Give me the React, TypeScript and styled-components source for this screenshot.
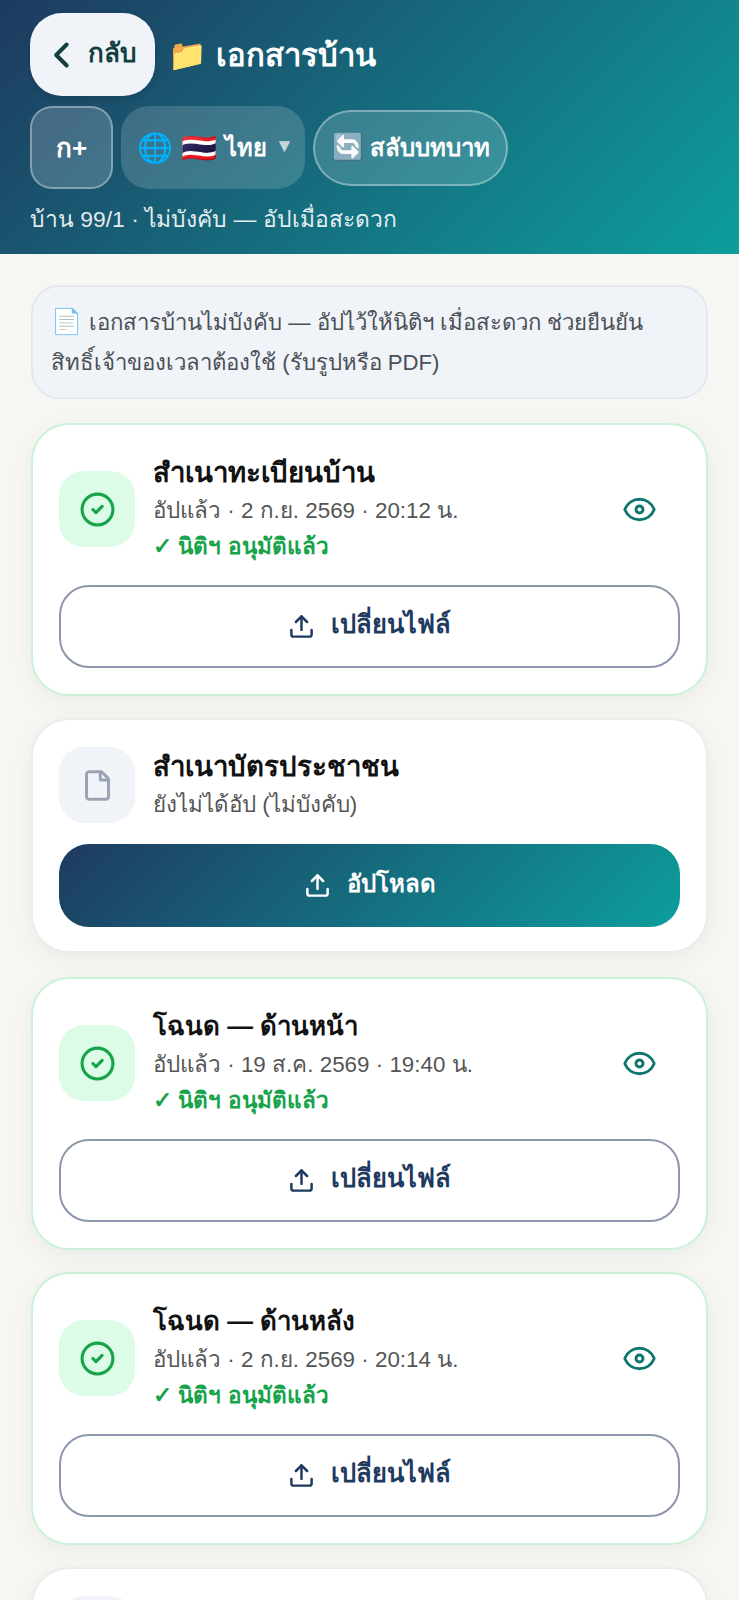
import * as React from "react";
import styled, { createGlobalStyle } from "styled-components";

const GlobalStyle = createGlobalStyle`
    html, body {
        margin: 0;
        padding: 0;
        background: #f6f7f2;
        font-family: "Liberation Sans", "Noto Sans", sans-serif;
    }
    * { box-sizing: border-box; }
`;

const Page = styled.div`
    width: 739px;
    height: 1600px;
    overflow: hidden;
    background: #f6f7f2;
`;

const Header = styled.header`
    height: 254px;
    padding: 13px 30px 0;
    background: linear-gradient(135deg, #1e3a5f, #0d9e9c);
    color: #fff;
`;

const TitleRow = styled.div`
    display: flex;
    align-items: center;
    gap: 13px;
`;

const BackButton = styled.button`
    width: 125px;
    height: 83px;
    border: none;
    border-radius: 32px;
    background: #f0f4f8;
    color: #143f3f;
    font: bold 26px "Liberation Sans", sans-serif;
    display: flex;
    align-items: center;
    justify-content: center;
    gap: 12px;
    padding: 0;
    box-shadow: 0 2px 6px rgba(0,0,0,0.15);
`;

const Label = styled.span`
    margin-bottom: 5px;
`;

const Title = styled.h1`
    margin: 0;
    font-size: 31px;
    font-weight: 700;
`;

const ToolRow = styled.div`
    display: flex;
    align-items: center;
    gap: 8px;
    margin-top: 10px;
`;

const FontButton = styled.div`
    width: 83px;
    height: 83px;
    border-radius: 22px;
    border: 2px solid rgba(255,255,255,0.35);
    background: rgba(255,255,255,0.18);
    display: flex;
    align-items: center;
    justify-content: center;
    font-size: 26px;
    font-weight: 700;
`;

const Emoji = styled.span<{ $size: number }>`
    font-size: ${p => p.$size}px;
`;

const NoticeEmoji = styled.span`
    font-size: 25px;
    margin-right: 7px;
`;

const LangSelect = styled.div`
    width: 184px;
    height: 83px;
    padding-left: 5px;
    border-radius: 28px;
    background: rgba(255,255,255,0.16);
    display: flex;
    align-items: center;
    justify-content: center;
    gap: 8px;
    font-size: 23.7px;
    font-weight: 700;
`;

const Caret = styled.span`
    font-size: 19px;
    opacity: 0.7;
    margin-bottom: 4px;
`;

const RoleButton = styled.div`
    width: 195px;
    height: 76px;
    border-radius: 38px;
    border: 2px solid rgba(255,255,255,0.35);
    background: rgba(255,255,255,0.16);
    display: flex;
    align-items: center;
    justify-content: center;
    gap: 6px;
    font-size: 24px;
    font-weight: 700;
    white-space: nowrap;
`;

const SubTitle = styled.div`
    margin-top: 12px;
    font-size: 22.85px;
    line-height: 36px;
    color: rgba(255,255,255,0.9);
`;

const Body = styled.main`
    padding: 31px 31px 0;
    display: flex;
    flex-direction: column;
    gap: 22px;
`;

const Notice = styled.div`
    height: 114px;
    padding: 14px 30px 14px 18px;
    border-radius: 28px;
    border: 2px solid #e4e8ee;
    background: #f0f4f8;
    color: #4a4f57;
    font-size: 22.2px;
    line-height: 40px;
    margin-bottom: 2px;
`;

const Card = styled.section<{ $done?: boolean }>`
    flex: none;
    padding: ${p => (p.$done ? "28px 26px 26px" : "27px 26px 24px")};
    margin-bottom: ${p => (p.$done ? "0" : "2px")};
    border-radius: 38px;
    background: #fff;
    border: 2px solid ${p => (p.$done ? "#c9f2d8" : "#ebedeb")};
    box-shadow: 0 6px 24px rgba(0,0,0,0.05);
`;

const CardTop = styled.div`
    display: flex;
    align-items: center;
    gap: 18px;
`;

const IconBox = styled.div<{ $done?: boolean }>`
    flex: none;
    width: 76px;
    height: 76px;
    border-radius: 25px;
    background: ${p => (p.$done ? "#dcfce7" : "#f0f4f8")};
    display: flex;
    align-items: center;
    justify-content: center;
`;

const Info = styled.div`
    flex: 1;
    min-width: 0;
`;

const DocName = styled.div<{ $size: number }>`
    font-size: ${p => p.$size}px;
    font-weight: 700;
    line-height: 39px;
    color: #111;
`;

const DocMeta = styled.div`
    font-size: 22.4px;
    line-height: 37px;
    color: #555;
`;

const Approved = styled.div`
    font-size: 22.5px;
    font-weight: 700;
    line-height: 36px;
    color: #16a34a;
`;

const EyeButton = styled.div`
    flex: none;
    width: 56px;
    display: flex;
    justify-content: center;
    margin-right: 13px;
    color: #0f766e;
`;

const ActionButton = styled.div<{ $primary?: boolean }>`
    height: 83px;
    margin-top: ${p => (p.$primary ? "21px" : "20px")};
    border-radius: 30px;
    display: flex;
    align-items: center;
    justify-content: center;
    gap: 16px;
    font-size: ${p => (p.$primary ? "24px" : "25.4px")};
    font-weight: 700;
    border: ${p => (p.$primary ? "none" : "2px solid #8d97ab")};
    background: ${p => (p.$primary ? "linear-gradient(135deg, #1e3a5f, #0d9e9c)" : "#fff")};
    color: ${p => (p.$primary ? "#fff" : "#1e3a5f")};
`;

const UploadIcon = () => (
    <svg width="27" height="27" viewBox="0 0 24 24" fill="none" stroke="currentColor" strokeWidth="2.2" strokeLinecap="round" strokeLinejoin="round">
        <path d="M12 3v12" />
        <path d="m17 8-5-5-5 5" />
        <path d="M21 15v4a2 2 0 0 1-2 2H5a2 2 0 0 1-2-2v-4" />
    </svg>
);

const CheckIcon = () => (
    <svg width="37" height="37" viewBox="0 0 24 24" fill="none" stroke="#16a34a" strokeWidth="2" strokeLinecap="round" strokeLinejoin="round">
        <circle cx="12" cy="12" r="10" />
        <path d="m9 12 2 2 4-4" />
    </svg>
);

const FileIcon = () => (
    <svg width="33" height="33" viewBox="0 0 24 24" fill="none" stroke="#9aa3b5" strokeWidth="2.2" strokeLinecap="round" strokeLinejoin="round">
        <path d="M6 22a2 2 0 0 1-2-2V4a2 2 0 0 1 2-2h8a2.4 2.4 0 0 1 1.706.706l3.588 3.588A2.4 2.4 0 0 1 20 8v12a2 2 0 0 1-2 2z" />
        <path d="M14 2v5a1 1 0 0 0 1 1h5" />
    </svg>
);

const EyeIcon = () => (
    <svg width="35" height="35" viewBox="0 0 24 24" fill="none" stroke="currentColor" strokeWidth="2" strokeLinecap="round" strokeLinejoin="round">
        <path d="M2.062 12.348a1 1 0 0 1 0-.696 10.75 10.75 0 0 1 19.876 0 1 1 0 0 1 0 .696 10.75 10.75 0 0 1-19.876 0" />
        <circle cx="12" cy="12" r="2.4" />
    </svg>
);

const BackIcon = () => (
    <svg width="28" height="34" viewBox="0 0 24 24" fill="none" stroke="currentColor" strokeWidth="3.4" strokeLinecap="round" strokeLinejoin="round">
        <path d="M16 3 7 12l9 9" />
    </svg>
);

const docs = [
    { name: "สำเนาทะเบียนบ้าน", size: 27.6, date: "2 ก.ย. 2569 · 20:12 น." },
    { name: "สำเนาบัตรประชาชน", size: 27.6 },
    { name: "โฉนด — ด้านหน้า", size: 25.8, date: "19 ส.ค. 2569 · 19:40 น." },
    { name: "โฉนด — ด้านหลัง", size: 25.8, date: "2 ก.ย. 2569 · 20:14 น." },
    { name: "หนังสือมอบอำนาจ", size: 27.6 },
];

const App = () => {
    return (
        <Page lang="th">
            <GlobalStyle />
            <Header>
                <TitleRow>
                    <BackButton><BackIcon /><Label>กลับ</Label></BackButton>
                    <Title>📁 เอกสารบ้าน</Title>
                </TitleRow>
                <ToolRow>
                    <FontButton>ก+</FontButton>
                    <LangSelect><Emoji $size={29}>🌐</Emoji><Emoji $size={29}>🇹🇭</Emoji>ไทย<Caret>▼</Caret></LangSelect>
                    <RoleButton><Emoji $size={26}>🔄</Emoji>สลับบทบาท</RoleButton>
                </ToolRow>
                <SubTitle>บ้าน 99/1 · ไม่บังคับ — อัปเมื่อสะดวก</SubTitle>
            </Header>
            <Body>
                <Notice><NoticeEmoji>📄</NoticeEmoji>เอกสารบ้านไม่บังคับ — อัปไว้ให้นิติฯ เมื่อสะดวก ช่วยยืนยันสิทธิ์เจ้าของเวลาต้องใช้ (รับรูปหรือ PDF)</Notice>
                {docs.map(doc => (
                    <Card key={doc.name} $done={!!doc.date}>
                        <CardTop>
                            <IconBox $done={!!doc.date}>{doc.date ? <CheckIcon /> : <FileIcon />}</IconBox>
                            <Info>
                                <DocName $size={doc.size}>{doc.name}</DocName>
                                <DocMeta>{doc.date ? `อัปแล้ว · ${doc.date}` : "ยังไม่ได้อัป (ไม่บังคับ)"}</DocMeta>
                                {doc.date && <Approved>✓ นิติฯ อนุมัติแล้ว</Approved>}
                            </Info>
                            {doc.date && <EyeButton><EyeIcon /></EyeButton>}
                        </CardTop>
                        <ActionButton $primary={!doc.date}>
                            <UploadIcon />
                            <Label>{doc.date ? "เปลี่ยนไฟล์" : "อัปโหลด"}</Label>
                        </ActionButton>
                    </Card>
                ))}
            </Body>
        </Page>
    );
};

export default App;
